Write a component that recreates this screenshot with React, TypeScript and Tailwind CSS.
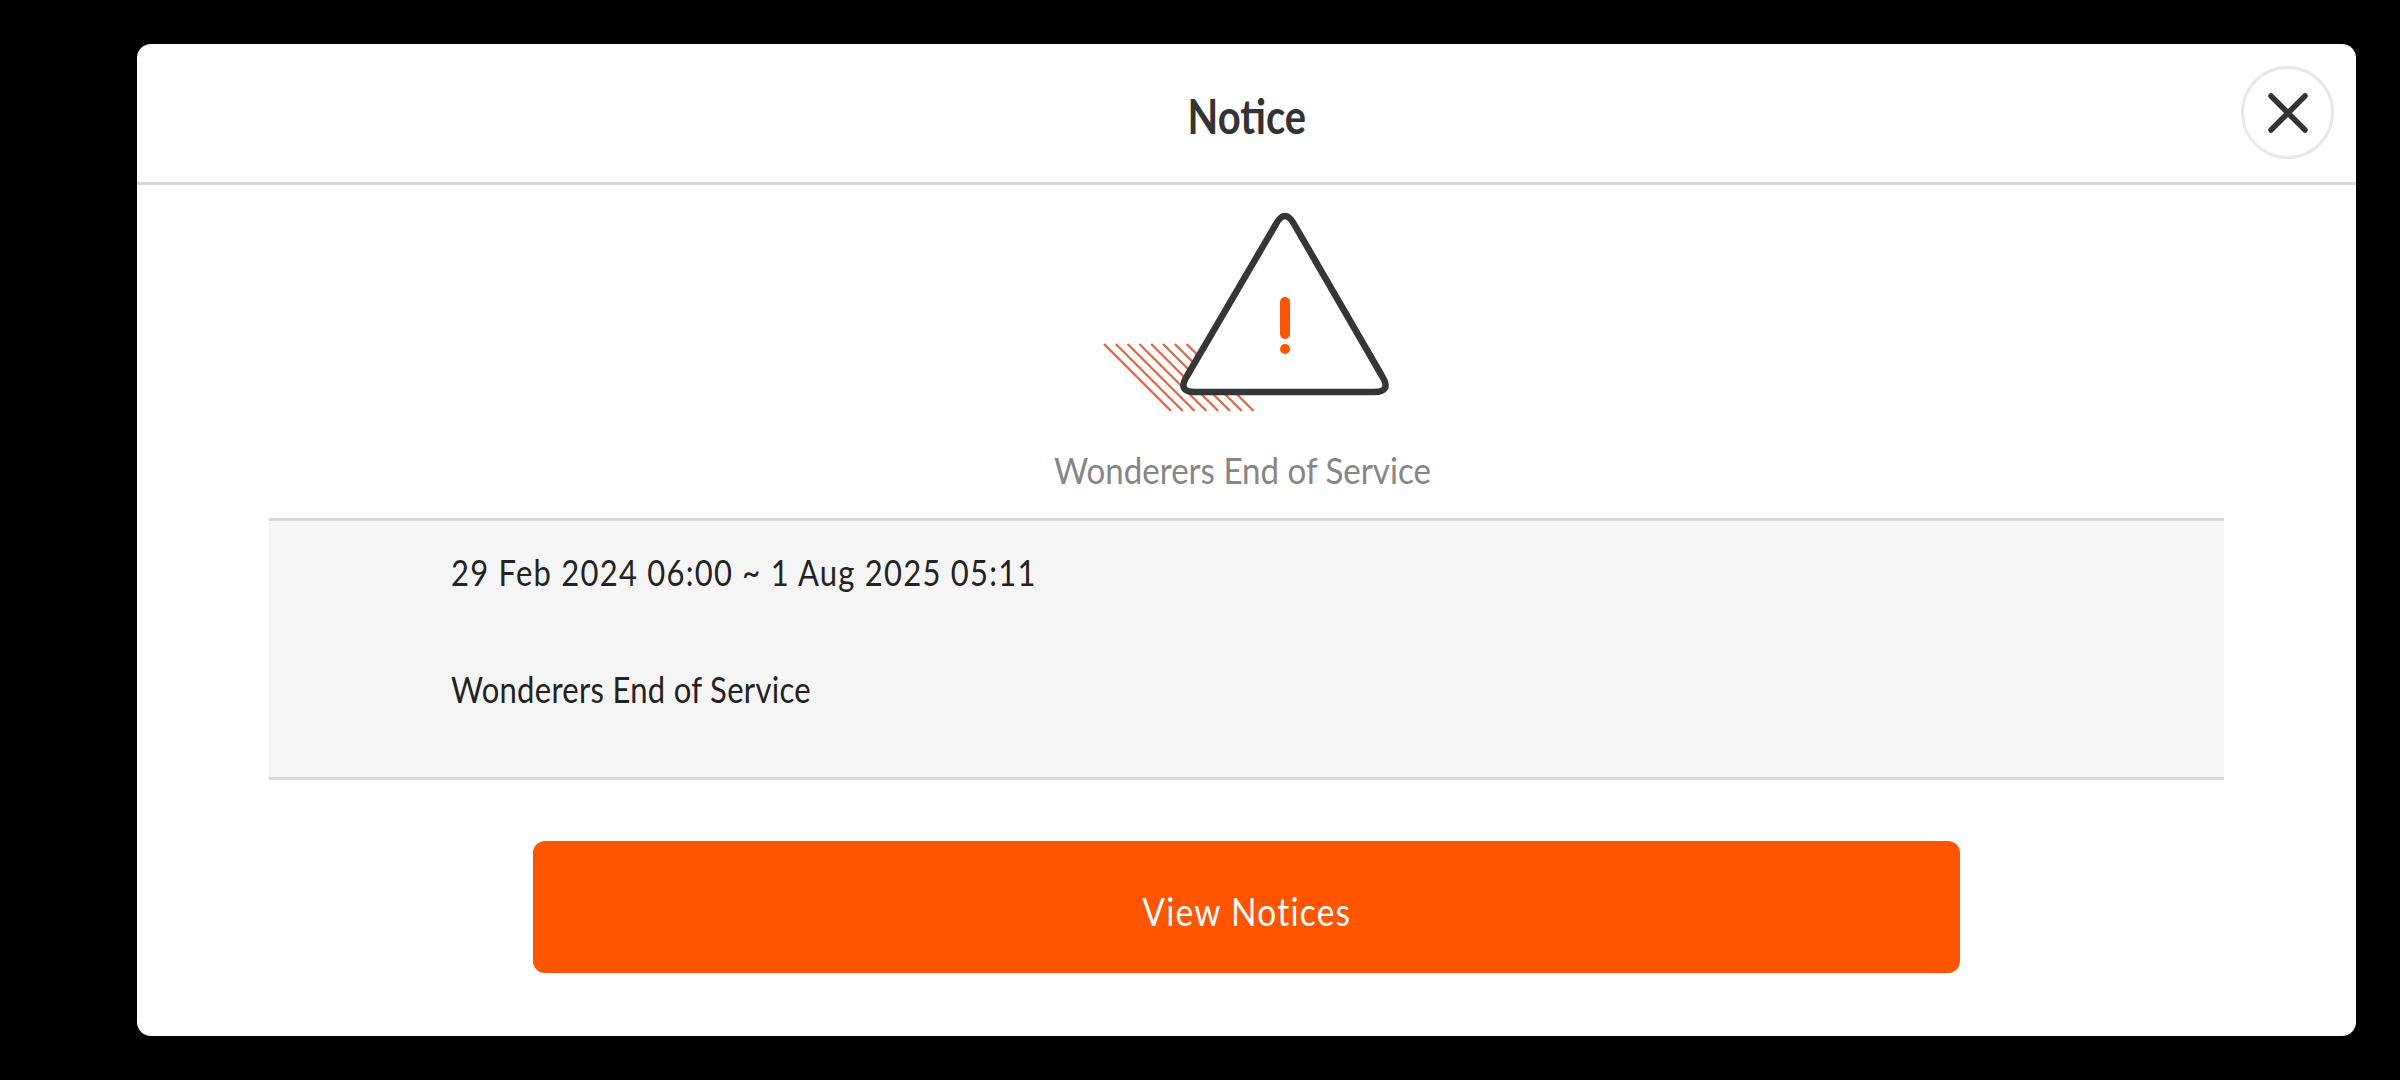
export default function App() {
  const hatch = [0, 1, 2, 3, 4, 5, 6, 7];
  return (
    <div className="h-[1080px] w-[2400px] overflow-hidden bg-black pl-[137px] pt-[44px] font-['Lato',sans-serif]">
      <div className="relative h-[992px] w-[2219px] rounded-[14px] bg-white">
        <div className="flex h-[141px] items-center justify-center border-b-[3px] border-[#d8d8d8] pt-[6px]">
          <h1 className="scale-x-[0.85] text-[47px] leading-[60px] font-bold text-[#333333]">Notice</h1>
        </div>
        <button className="absolute top-[22px] left-[2104px] flex h-[93px] w-[93px] items-center justify-center rounded-full border-[3px] border-[#e8e8e8] bg-white">
          <svg width="40" height="40" viewBox="0 0 40 40" fill="none" stroke="#333333" strokeWidth="5.5" strokeLinecap="round">
            <path d="M3 3 L37 37 M37 3 L3 37" />
          </svg>
        </button>
        <svg className="mt-[25px] ml-[963px] block" width="295" height="205" viewBox="1100 210 295 205" fill="none">
          {hatch.map((i) => (
            <path key={i} d={`M${1104 + i * 11.8} 344 L${1171 + i * 11.8} 411`} stroke="#de6b47" strokeWidth="2.4" />
          ))}
          <path
            d="M1276 224 Q1285 208 1294 224 L1382 376 Q1392 392 1374 392 L1195 392 Q1177 392 1187 376 Z"
            fill="white"
            stroke="#363636"
            strokeWidth="6.5"
            strokeLinejoin="round"
          />
          <rect x="1280" y="297" width="10" height="42" rx="5" fill="#ff5500" />
          <circle cx="1285" cy="349" r="5" fill="#ff5500" />
        </svg>
        <p className="mt-[35px] scale-x-[0.895] pr-[9px] text-center text-[37px] leading-[40px] text-[#868686]">Wonderers End of Service</p>
        <div className="mx-[132px] mt-[28px] flex h-[262px] flex-col border-y-[3px] border-[#d8d8d8] bg-[#f5f5f5] pl-[182px]">
          <p className="mt-[31px] origin-left scale-x-[0.86] text-[36px] leading-[40px] tracking-[1.45px] whitespace-nowrap text-[#222222]">29 Feb 2024 06:00 ~ 1 Aug 2025 05:11</p>
          <p className="mt-[77px] origin-left scale-x-[0.86] text-[36px] leading-[40px] tracking-[0.37px] text-[#222222]">Wonderers End of Service</p>
        </div>
        <button className="mx-auto mt-[61px] flex h-[132px] w-[1427px] items-center justify-center rounded-xl bg-[#ff5500] pt-[8px]">
          <span className="scale-x-[0.88] text-[38px] leading-[44px] tracking-[1.45px] text-white">View Notices</span>
        </button>
      </div>
    </div>
  );
}
